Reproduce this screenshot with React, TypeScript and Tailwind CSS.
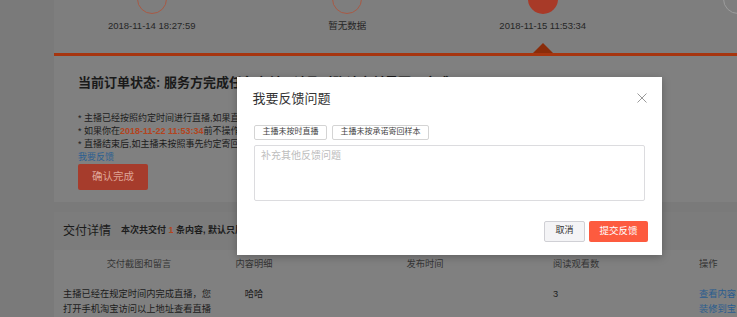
import React from "react";

const steps = [
  { date: "2018-11-14 18:27:59", kind: "done" },
  { date: "暂无数据", kind: "done" },
  { date: "2018-11-15 11:53:34", kind: "current" },
  { date: "", kind: "todo" },
];

function Circle({ kind }: { kind: string }) {
  if (kind === "current")
    return <div className="w-[30px] h-[30px] -mt-[16px] rounded-full bg-[#a83a28] shrink-0" />;
  if (kind === "todo")
    return <div className="w-[30px] h-[30px] -mt-[16px] rounded-full border border-[#9c9c9c] shrink-0" />;
  return <div className="w-[30px] h-[30px] -mt-[16px] rounded-full border border-[#a85a45] shrink-0" />;
}

export default function App() {
  return (
    <div className="relative w-[737px] h-[317px] overflow-hidden bg-[#7a7a7a] flex font-['Liberation_Sans','Noto_Sans_CJK_SC',sans-serif] text-[#1c1c1c]">
      <div className="w-[54px] shrink-0" />
      <div className="flex-1 min-w-0 flex flex-col">
        {/* steps */}
        <div className="h-[53px] bg-[#7e7e7e] flex shrink-0">
          {steps.map((s, i) => (
            <div key={i} className="w-[195.5px] shrink-0 h-[53px] flex flex-col items-center">
              <Circle kind={s.kind} />
              <div className="mt-[5.5px] text-[9.5px] leading-[12px] text-[#262626] whitespace-nowrap">{s.date}</div>
              {s.kind === "current" && (
                <div className="mt-auto w-0 h-0 border-x-[10.5px] border-x-transparent border-b-[10px] border-b-[#8a2c0a]" />
              )}
            </div>
          ))}
        </div>
        <div className="h-[3px] bg-[#a6350f] shrink-0" />

        {/* status card */}
        <div className="h-[146px] shrink-0 bg-[#808080] pl-[24px] pt-[18px] overflow-hidden">
          <div className="text-[13px] font-bold leading-[18px] whitespace-nowrap text-[#1a1a1a]">
            当前订单状态: 服务方完成任务交付，请及时确认交付是否已完成
          </div>
          <div className="mt-[19.5px] text-[9px] leading-[13px] whitespace-nowrap text-[#1c1c1c]">
            <div>* 主播已经按照约定时间进行直播,如果直播内容有问题请及时反馈</div>
            <div>
              * 如果你在<span className="font-bold text-[#b3441e]">2018-11-22 11:53:34</span>前不操作，系统将自动确认完成
            </div>
            <div>* 直播结束后,如主播未按照事先约定寄回样品，请及时反馈</div>
            <div className="text-[#2b5f91]">我要反馈</div>
          </div>
          <div className="w-[70px] h-[26px] bg-[#a63c2c] rounded-[2px] text-[10.5px] text-[#dfa597] flex items-center justify-center">
            确认完成
          </div>
        </div>

        <div className="h-[10px] shrink-0" />

        {/* delivery details */}
        <div className="h-[38px] shrink-0 bg-[#7c7c7c] flex items-center pl-[9px] whitespace-nowrap">
          <span className="text-[12px] text-[#1a1a1a]">交付详情</span>
          <span className="ml-[10px] text-[9px] font-semibold text-[#1c1c1c]">
            本次共交付 <span className="text-[#b3441e]">1</span> 条内容, 默认只展示最新一条交付内容
          </span>
        </div>
        <div className="flex-1 bg-[#808080]">
          <div className="grid grid-cols-[170px_60px_269px_145px_1fr] h-[30px] items-center text-[9.25px] text-[#353535] whitespace-nowrap">
            <div className="text-center">交付截图和留言</div>
            <div className="text-center">内容明细</div>
            <div className="text-center pl-[13px]">发布时间</div>
            <div>阅读观看数</div>
            <div className="pl-[1px]">操作</div>
          </div>
          <div className="grid grid-cols-[170px_60px_269px_145px_1fr] pt-[6.5px] text-[9.25px] leading-[15px] text-[#1c1c1c] whitespace-nowrap">
            <div className="pl-[9px]">
              主播已经在规定时间内完成直播，您
              <br />
              打开手机淘宝访问以上地址查看直播
            </div>
            <div className="text-center">哈哈</div>
            <div />
            <div>3</div>
            <div className="pl-[1px] text-[#2a5d8f]">
              查看内容
              <br />
              装修到宝贝
            </div>
          </div>
        </div>
      </div>

      {/* modal */}
      <div className="absolute left-[237px] top-[77px] w-[425px] h-[178px] bg-white shadow-[0_2px_8px_rgba(0,0,0,0.25)] flex flex-col">
        <div className="pt-[12.5px] px-[15.5px] flex justify-between items-center">
          <div className="text-[13px] leading-[18px] text-[#333]">我要反馈问题</div>
          <svg width="10" height="10" viewBox="0 0 10 10" className="-mt-[2px]">
            <path d="M0.5 0.5 L9.5 9.5 M9.5 0.5 L0.5 9.5" stroke="#9a9a9a" strokeWidth="1" fill="none" />
          </svg>
        </div>
        <div className="mt-[17px] pl-[17px] flex gap-[5px]">
          <div className="w-[73px] h-[15px] border border-[#d4d4d4] rounded-[2px] text-[8px] leading-none text-[#444] flex items-center justify-center whitespace-nowrap">
            主播未按时直播
          </div>
          <div className="w-[97px] h-[15px] border border-[#d4d4d4] rounded-[2px] text-[8px] leading-none text-[#444] flex items-center justify-center whitespace-nowrap">
            主播未按承诺寄回样本
          </div>
        </div>
        <textarea
          className="mt-[5.5px] ml-[17px] w-[391px] h-[56px] border border-[#dcdcdf] rounded-[2px] px-[6px] py-[3px] text-[10px] leading-[14px] text-[#333] placeholder:text-[#bdbdbd] resize-none outline-none"
          placeholder="补充其他反馈问题"
        />
        <div className="mt-[19.7px] pr-[14px] flex justify-end gap-[4px]">
          <div className="w-[41px] h-[21px] bg-[#f4f4f6] border border-[#d0d0d5] rounded-[2px] text-[9px] text-[#333] flex items-center justify-center">
            取消
          </div>
          <div className="w-[59px] h-[21px] bg-[#fd5b3f] rounded-[2px] text-[9.5px] text-white flex items-center justify-center">
            提交反馈
          </div>
        </div>
      </div>
    </div>
  );
}
